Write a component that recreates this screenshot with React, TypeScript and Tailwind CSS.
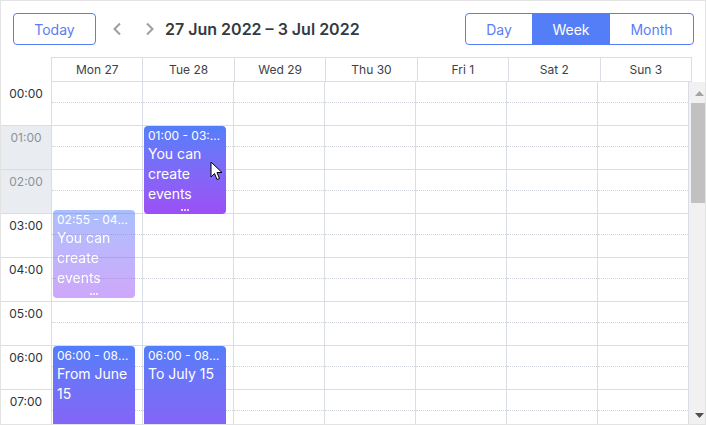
import React from "react";

const days = ["Mon 27", "Tue 28", "Wed 29", "Thu 30", "Fri 1", "Sat 2", "Sun 3"];
const hours = ["00:00", "01:00", "02:00", "03:00", "04:00", "05:00", "06:00", "07:00"];

type Ev = { col: number; top: number; height: number; time: string; title: string; faded?: boolean; dots?: boolean };

const events: Ev[] = [
  { col: 1, top: 44, height: 88, time: "01:00 - 03:00", title: "You can create events", dots: true },
  { col: 0, top: 128, height: 88, time: "02:55 - 04:55", title: "You can create events", faded: true, dots: true },
  { col: 0, top: 264, height: 132, time: "06:00 - 08:00", title: "From June 15" },
  { col: 1, top: 264, height: 132, time: "06:00 - 08:00", title: "To July 15" },
];

function Event({ ev }: { ev: Ev }) {
  return (
    <div
      className={`absolute left-[1px] w-[82px] rounded-[4px] bg-gradient-to-b from-[#537ef9] to-[#9b4ff6] text-white px-[4px] pt-[2px] overflow-hidden ${ev.faded ? "opacity-50" : ""}`}
      style={{ top: ev.top, height: ev.height }}
    >
      <div className="text-[12px] leading-4 truncate">{ev.time}</div>
      <div className="text-[14px] leading-5">{ev.title}</div>
      {ev.dots && (
        <div className="absolute bottom-[3px] left-0 right-0 flex justify-center gap-[1px]">
          <span className="w-[2px] h-[2px] rounded-full bg-white" />
          <span className="w-[2px] h-[2px] rounded-full bg-white" />
          <span className="w-[2px] h-[2px] rounded-full bg-white" />
        </div>
      )}
    </div>
  );
}

export default function App() {
  return (
    <div
      className="w-[706px] h-[425px] border border-[#e3e3e3] bg-white flex flex-col overflow-hidden"
      style={{ fontFamily: "Inter, 'Noto Sans', sans-serif" }}
    >
      {/* Toolbar */}
      <div className="flex items-center h-[32px] mt-[12px] pl-[12px] pr-[11px] mb-[12px]">
        <button className="w-[83px] h-[32px] border border-[#587ef5] rounded-[4px] text-[14px] text-[#5a7ef2]">
          Today
        </button>
        <div className="ml-[16px] flex items-center gap-[23px] text-[#9a9fa6]">
          <svg width="10" height="14" viewBox="0 0 10 14">
            <polyline points="8,1.5 2.5,7 8,12.5" fill="none" stroke="currentColor" strokeWidth="2" />
          </svg>
          <svg width="10" height="14" viewBox="0 0 10 14">
            <polyline points="2,1.5 7.5,7 2,12.5" fill="none" stroke="currentColor" strokeWidth="2" />
          </svg>
        </div>
        <div className="ml-[10px] text-[16px] font-semibold text-[#343a40]">27 Jun 2022 – 3 Jul 2022</div>
        <div className="ml-auto flex h-[32px] border border-[#587ef5] rounded-[4px] overflow-hidden text-[14px]">
          <div className="w-[66px] flex items-center justify-center text-[#5a7ef2]">Day</div>
          <div className="w-[78px] flex items-center justify-center bg-[#547ef8] text-white">Week</div>
          <div className="w-[83px] flex items-center justify-center text-[#5a7ef2]">Month</div>
        </div>
      </div>

      {/* Header */}
      <div className="flex h-[25px] shrink-0">
        <div className="w-[50px] shrink-0" />
        <div className="w-[641px] shrink-0 grid grid-cols-7 border-l border-t border-b border-[#d9dee4]">
          {days.map((d) => (
            <div key={d} className="border-r border-[#d9dee4] flex items-center justify-center text-[12px] text-[#3d4147]">
              {d}
            </div>
          ))}
        </div>
        <div className="flex-1" />
      </div>

      {/* Body */}
      <div className="flex flex-1 min-h-0 overflow-hidden">
        <div className="w-[51px] shrink-0 border-r border-[#d9dee4] flex flex-col">
          {hours.map((h, i) => (
            <div
              key={h}
              className={`h-[44px] shrink-0 border-b border-[#d9dee4] text-center text-[12px] pt-[3px] ${
                i === 1 || i === 2 ? "bg-[#e9edf1] text-[#8d9299]" : "text-[#2f3338]"
              }`}
            >
              {h}
            </div>
          ))}
        </div>
        <div className="w-[637px] shrink-0 grid grid-cols-7">
          {days.map((d, ci) => (
            <div key={d} className="relative border-r border-[#d9dee4] flex flex-col">
              {hours.map((h) => (
                <div key={h} className="h-[44px] shrink-0 border-b border-[#d9dee4]">
                  <div className="h-[21px] border-b border-dotted border-[#d0d5dc]" />
                </div>
              ))}
              {events
                .filter((e) => e.col === ci)
                .map((e, k) => (
                  <Event key={k} ev={e} />
                ))}
              {ci === 1 && (
                <svg className="absolute left-[67px] top-[79px]" width="14" height="21" viewBox="0 0 14 21">
                  <path
                    d="M1 1 L1 16 L4.5 12.5 L7 18.5 L9.5 17.5 L7 11.5 L12 11.5 Z"
                    fill="white"
                    stroke="black"
                    strokeWidth="1"
                    strokeLinejoin="round"
                  />
                </svg>
              )}
            </div>
          ))}
        </div>
        {/* Scrollbar */}
        <div className="w-[16px] shrink-0 bg-[#f1f1f1] flex flex-col">
          <div className="h-[21px] shrink-0 pt-[9px] pl-[6px]">
            <svg width="9" height="5" viewBox="0 0 9 5">
              <polygon points="4.5,0 9,5 0,5" fill="#a3a3a3" />
            </svg>
          </div>
          <div className="h-[100px] shrink-0 ml-[2px] bg-[#c1c1c1]" />
          <div className="flex-1" />
          <div className="h-[16px] shrink-0 pl-[6px] pt-[5px]">
            <svg width="9" height="5" viewBox="0 0 9 5">
              <polygon points="0,0 9,0 4.5,5" fill="#505050" />
            </svg>
          </div>
        </div>
      </div>
    </div>
  );
}
